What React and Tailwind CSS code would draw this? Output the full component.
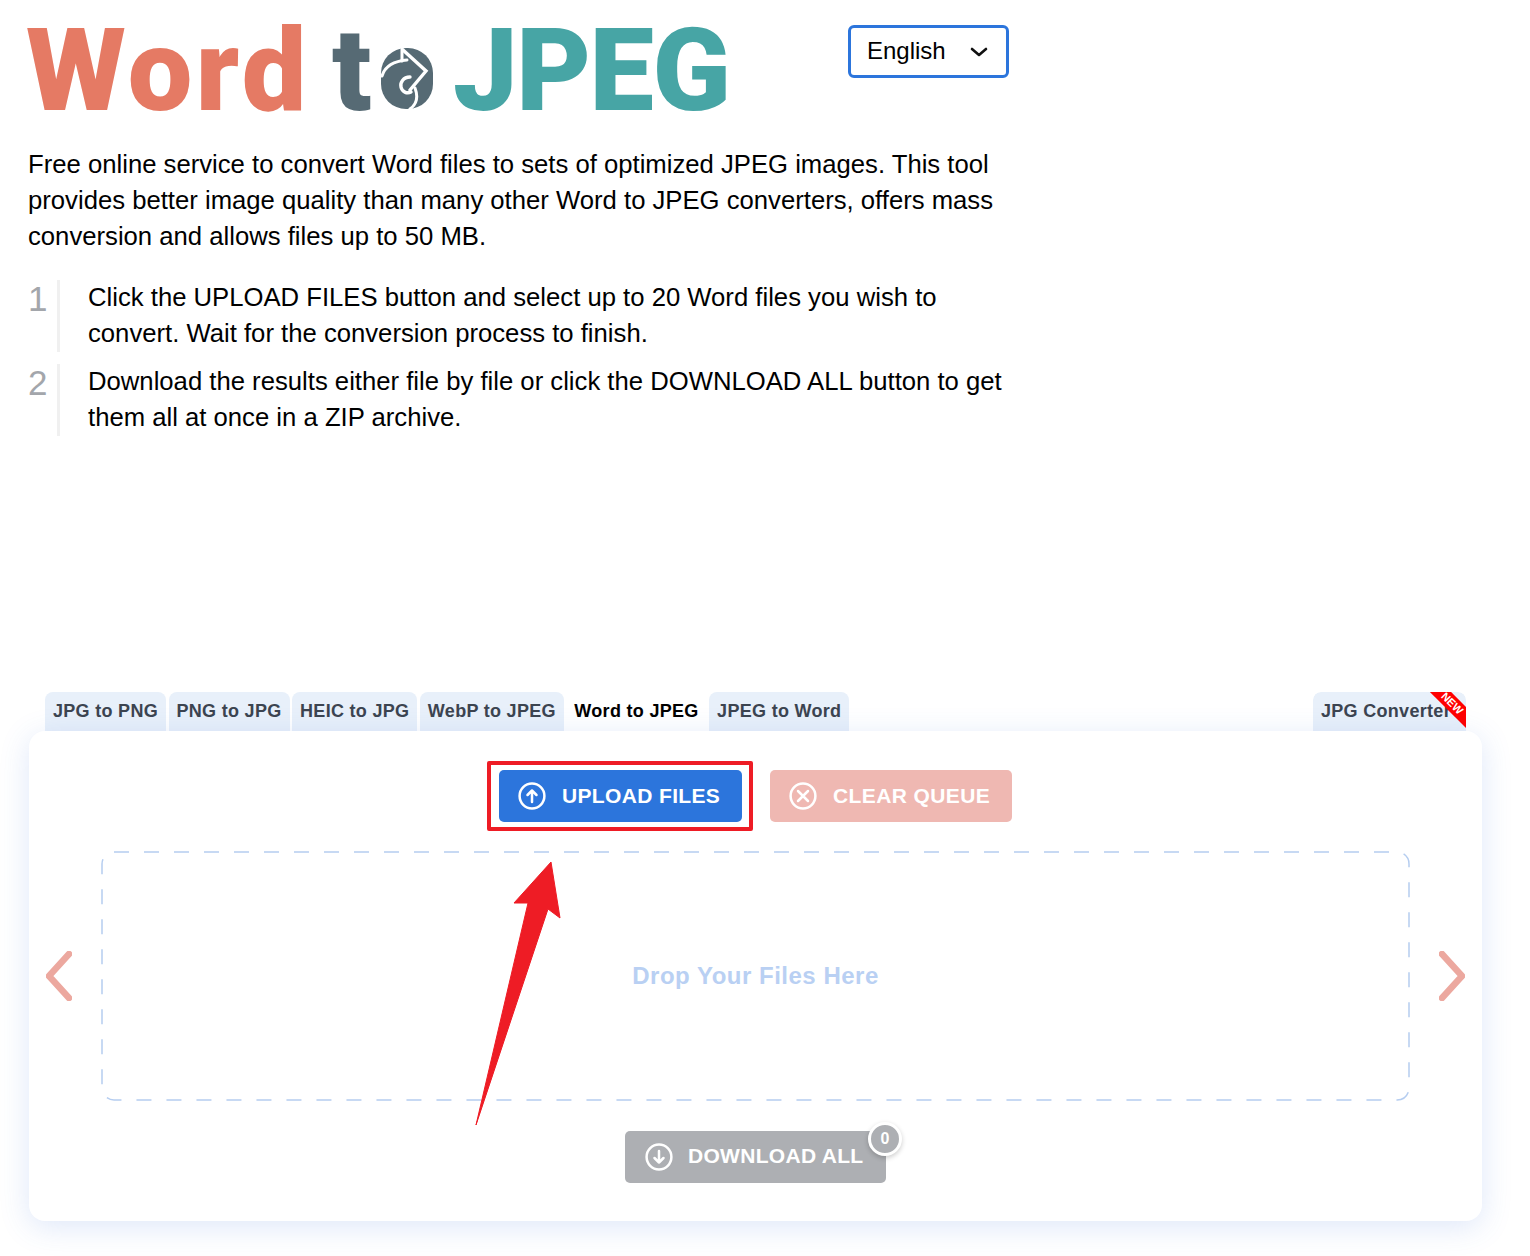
import React from 'react';

const tabs = ['JPG to PNG', 'PNG to JPG', 'HEIC to JPG', 'WebP to JPEG', 'Word to JPEG', 'JPEG to Word'];

function CircleIcon({ children }) {
  return (
    <svg width="28" height="28" viewBox="0 0 28 28" fill="none" stroke="currentColor" strokeWidth="2.5" strokeLinecap="round" strokeLinejoin="round" className="shrink-0">
      <circle cx="14" cy="14" r="12.4" />
      {children}
    </svg>
  );
}

function LogoO() {
  return (
    <svg width="52" height="61" viewBox="0 0 52 61" className="mb-[2px]">
      <rect x="0" y="0" width="52" height="61" rx="25" fill="#566a74" />
      <g fill="none" stroke="#fff" strokeWidth="3" strokeLinecap="round" strokeLinejoin="miter">
        <path d="M1 28C4 18 14 13 26 12" />
        <path d="M21 0V13" />
        <path d="M22 2L45 23L29 42" strokeWidth="3.4" />
        <path d="M29 29C22 29 19 35 20 39C21 44 26 46 30 44" strokeWidth="3.4" />
        <path d="M34 40C37 48 36 56 29 61" />
      </g>
    </svg>
  );
}

function Tab({ label, active }) {
  return (
    <div className={`h-[39px] px-2 flex items-center rounded-t-lg text-[18px] font-bold tracking-[0.3px] ${active ? 'bg-white text-black' : 'bg-[#e8f0fa] text-[#3c4450]'}`}>
      {label}
    </div>
  );
}

function Chevron({ flip }) {
  return (
    <svg width="26" height="50" viewBox="0 0 26 50" fill="none" stroke="#eca89f" strokeWidth="6.5" strokeLinecap="round" strokeLinejoin="round" className="shrink-0">
      <path d={flip ? 'M3 3L23 25L3 47' : 'M23 3L3 25L23 47'} />
    </svg>
  );
}

export default function App() {
  return (
    <div className="w-[1530px] h-[1256px] overflow-hidden bg-white text-black font-['Liberation_Sans',Arial,sans-serif]">
      <div className="pl-[28px] pt-[25px]">
        <div className="flex items-start">
          <div className="w-[820px] h-[86px] flex items-end font-['Roboto',sans-serif] font-black text-[115px] leading-[80px]">
            <span className="text-[#e57a64] tracking-[3.5px] w-[304px] -ml-[2px] mr-[2px]">Word</span>
            <span className="text-[#566a74] w-[49px]">t</span>
            <LogoO />
            <span className="text-[#47a5a5] tracking-[-1.5px] ml-[20px]">JPEG</span>
          </div>
          <div className="w-[161px] h-[53px] flex items-center justify-between pl-[16px] pr-[18px] border-[3px] border-[#2c75dc] rounded-md text-[24px]">
            <span className="-mt-[2px]">English</span>
            <svg width="18" height="10" viewBox="0 0 18 10" fill="none" stroke="#111" strokeWidth="2.6" strokeLinecap="round" strokeLinejoin="round">
              <path d="M2 2L9 8L16 2" />
            </svg>
          </div>
        </div>

        <p className="mt-[35px] w-[985px] text-[25.68px] leading-[36px]">
          Free online service to convert Word files to sets of optimized JPEG images. This tool provides better image quality than many other Word to JPEG converters, offers mass conversion and allows files up to 50 MB.
        </p>

        <div className="mt-[26px] flex flex-col gap-3">
          <div className="flex h-[72px]">
            <div className="w-[29px] -mt-px text-[35px] leading-[40px] text-[#a3a6ab]">1</div>
            <div className="w-[980px] border-l-[3px] border-[#f0f0f0] pl-[28px] text-[25.68px] leading-[36px]">
              <div className="-mt-px">
                Click the UPLOAD FILES button and select up to 20 Word files you wish to<br />convert. Wait for the conversion process to finish.
              </div>
            </div>
          </div>
          <div className="flex h-[72px]">
            <div className="w-[29px] -mt-px text-[35px] leading-[40px] text-[#a3a6ab]">2</div>
            <div className="w-[980px] border-l-[3px] border-[#f0f0f0] pl-[28px] text-[25.68px] leading-[36px]">
              <div className="-mt-px">
                Download the results either file by file or click the DOWNLOAD ALL button to get<br />them all at once in a ZIP archive.
              </div>
            </div>
          </div>
        </div>
      </div>

      <div className="mt-[256px] ml-[29px] w-[1453px]">
        <div className="flex gap-[2.5px] pl-[16px] pr-[16px]">
          {tabs.map((t) => (
            <Tab key={t} label={t} active={t === 'Word to JPEG'} />
          ))}
          <div className="relative ml-auto w-[153px] overflow-hidden rounded-t-lg">
            <Tab label="JPG Converter" />
            <div className="absolute top-[4px] right-[-18px] w-[64px] h-[15px] rotate-45 bg-[#ff0000] text-white text-[11px] leading-[15px] font-bold text-center">
              NEW
            </div>
          </div>
        </div>

        <div className="relative h-[490px] rounded-2xl bg-white shadow-[0_6px_30px_rgba(60,110,220,0.17)] flex flex-col items-center">
          <div className="mt-[39px] w-[513px] flex gap-[28px]">
            <div className="relative h-[52px] w-[243px] shrink-0 rounded-[5px] bg-[#2c75dc] text-white flex items-center gap-[16px] pl-[19px] text-[21px] font-bold tracking-[0.35px]">
              <CircleIcon><path d="M14 20V8.5M9.5 13L14 8.5L18.5 13" /></CircleIcon>
              <span className="-mt-px">UPLOAD FILES</span>
              <div className="absolute -left-[12px] -right-[11px] -top-[9px] -bottom-[9px] border-[4px] border-[#ee1c25] rounded-[2px]" />
            </div>
            <div className="h-[52px] w-[242px] shrink-0 rounded-[5px] bg-[#efb8b2] text-white flex items-center gap-[16px] pl-[19px] text-[21px] font-bold tracking-[0.4px]">
              <CircleIcon><path d="M9 9L19 19M19 9L9 19" /></CircleIcon>
              <span className="-mt-px">CLEAR QUEUE</span>
            </div>
          </div>

          <div className="mt-[29px] w-full flex items-center justify-between pl-[17px] pr-[17px]">
            <Chevron />
            <div className="relative w-[1309px] h-[250px] flex items-center justify-center text-[24px] font-bold tracking-[0.5px] text-[#b9d0f3]">
              <svg width="1309" height="250" className="absolute inset-0" fill="none">
                <rect x="1" y="1" width="1307" height="248" rx="12" stroke="#b5cdf0" strokeWidth="1.5" strokeDasharray="15 15" />
              </svg>
              Drop Your Files Here
            </div>
            <Chevron flip />
          </div>

          <div className="relative mt-[30px] h-[52px] w-[261px] rounded-[5px] bg-[#adafb3] text-white flex items-center gap-[15px] pl-[20px] text-[21px] font-bold tracking-[0.3px]">
            <CircleIcon><path d="M14 8V19.5M9.5 15L14 19.5L18.5 15" /></CircleIcon>
            <span className="-mt-[3px]">DOWNLOAD ALL</span>
            <div className="absolute right-[-16px] top-[-9px] w-[34px] h-[34px] rounded-full bg-[#adafb3] border-[3px] border-white shadow-[0_2px_5px_rgba(0,0,0,0.2)] flex items-center justify-center text-[16px] tracking-normal">
              0
            </div>
          </div>

          {/* red annotation arrow */}
          <svg className="absolute left-[440px] top-[125px]" width="140" height="275" viewBox="440 125 140 275">
            <polygon
              points="522,131 531,187 519,178 447,394 499,172 485,172"
              fill="#ee1c25"
              stroke="#ee1c25"
              strokeWidth="1"
              strokeLinejoin="round"
            />
          </svg>
        </div>
      </div>
    </div>
  );
}
